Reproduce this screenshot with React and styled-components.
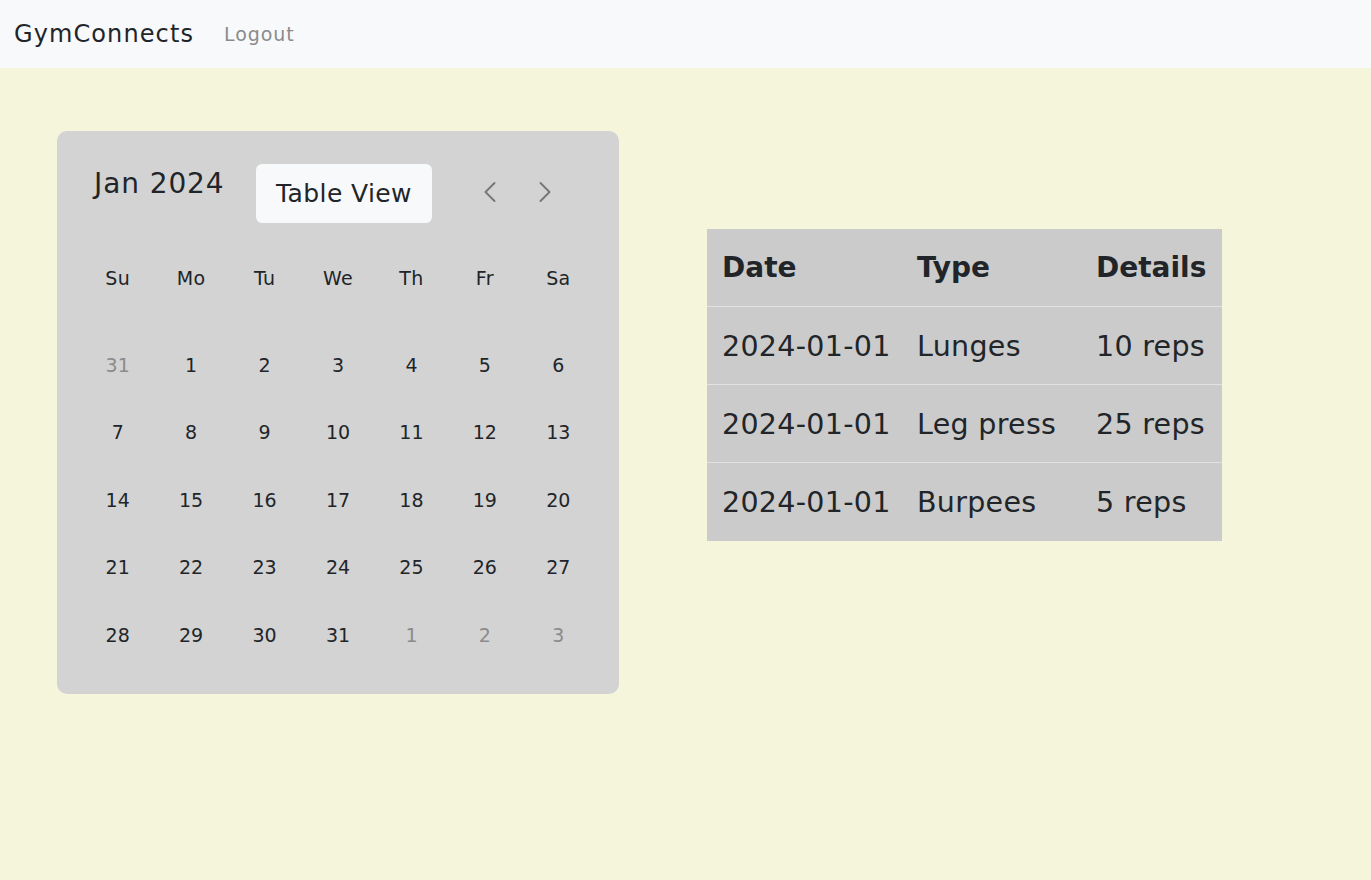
import React from "react";
import styled, { createGlobalStyle } from "styled-components";
import { ChevronLeft, ChevronRight } from "lucide-react";

const Global = createGlobalStyle`
  html, body { margin: 0; padding: 0; }
  body {
    background: #f5f5dc;
    font-family: "DejaVu Sans", "Liberation Sans", sans-serif;
    color: #212529;
    min-height: 880px;
  }
`;

const Navbar = styled.nav`
  height: 68px;
  background: #f8f9fa;
  display: flex;
  align-items: center;
  padding: 0 14px;
  gap: 30px;
`;

const Brand = styled.span`
  font-size: 24px;
  color: #212529;
  letter-spacing: 1.1px;
`;

const NavLink = styled.span`
  font-size: 19px;
  color: #8a8b8c;
  letter-spacing: 0.9px;
`;

const Main = styled.main`
  display: flex;
  align-items: flex-start;
  gap: 88px;
  padding: 63px 57px;
`;

const Card = styled.section`
  width: 562px;
  box-sizing: border-box;
  background: #d3d3d3;
  border-radius: 10px;
  padding: 33px 24px 25px;
`;

const Header = styled.div`
  display: flex;
  align-items: flex-start;
  padding-left: 13px;
  height: 59px;
`;

const Title = styled.h2`
  margin: 0;
  font-weight: 400;
  font-size: 28px;
  letter-spacing: 0.9px;
  line-height: 40px;
  width: 162px;
  white-space: nowrap;
`;

const ViewButton = styled.button`
  width: 176px;
  height: 59px;
  border: none;
  border-radius: 6px;
  background: #f8f9fa;
  font-family: inherit;
  font-size: 25px;
  letter-spacing: 0.4px;
  color: #212529;
  padding: 0;
`;

const Arrows = styled.div`
  display: flex;
  margin-left: 40px;
  margin-top: 10px;
  gap: 19px;
`;

const ArrowButton = styled.button`
  width: 36px;
  height: 36px;
  border: none;
  background: transparent;
  padding: 0;
  color: #777;
  display: flex;
  align-items: center;
  justify-content: center;
`;

const WeekRow = styled.div`
  display: grid;
  grid-template-columns: repeat(7, 1fr);
  height: 56px;
  margin-top: 27px;
  align-items: center;
  text-align: center;
  font-size: 19px;
  letter-spacing: 0.3px;
`;

const DaysGrid = styled.div`
  display: grid;
  grid-template-columns: repeat(7, 1fr);
  grid-auto-rows: 67.5px;
  margin-top: 25px;
  align-items: center;
  text-align: center;
`;

const Day = styled.span`
  font-size: 19px;
  color: ${(p) => (p.$muted ? "#8b8b8b" : "#212529")};
`;

const Table = styled.table`
  margin-top: 98px;
  border-collapse: collapse;
  background: #cbcbcb;
  table-layout: fixed;
  width: 515px;
`;

const Th = styled.th`
  text-align: left;
  font-weight: 700;
  font-size: 28px;
  height: 77px;
  padding: 0 0 0 15px;
  white-space: nowrap;
  border-bottom: 1px solid #e2e2e2;
`;

const Td = styled.td`
  font-size: 28.5px;
  letter-spacing: 0.3px;
  height: 75px;
  padding: 2px 0 0 15px;
  white-space: nowrap;
  border-bottom: 1px solid ${(p) => (p.$last ? "transparent" : "#e2e2e2")};
`;

const weeks = [
  [[31, true], [1], [2], [3], [4], [5], [6]],
  [[7], [8], [9], [10], [11], [12], [13]],
  [[14], [15], [16], [17], [18], [19], [20]],
  [[21], [22], [23], [24], [25], [26], [27]],
  [[28], [29], [30], [31], [1, true], [2, true], [3, true]],
];

const rows = [
  ["2024-01-01", "Lunges", "10 reps"],
  ["2024-01-01", "Leg press", "25 reps"],
  ["2024-01-01", "Burpees", "5 reps"],
];

export default function App() {
  return (
    <>
      <Global />
      <Navbar>
        <Brand>GymConnects</Brand>
        <NavLink>Logout</NavLink>
      </Navbar>
      <Main>
        <Card>
          <Header>
            <Title>Jan 2024</Title>
            <ViewButton>Table View</ViewButton>
            <Arrows>
              <ArrowButton aria-label="previous">
                <ChevronLeft size={36} strokeWidth={1.3} />
              </ArrowButton>
              <ArrowButton aria-label="next">
                <ChevronRight size={36} strokeWidth={1.3} />
              </ArrowButton>
            </Arrows>
          </Header>
          <WeekRow>
            {["Su", "Mo", "Tu", "We", "Th", "Fr", "Sa"].map((d) => (
              <span key={d}>{d}</span>
            ))}
          </WeekRow>
          <DaysGrid>
            {weeks.flat().map(([n, muted], i) => (
              <Day key={i} $muted={muted}>
                {n}
              </Day>
            ))}
          </DaysGrid>
        </Card>
        <Table>
          <colgroup>
            <col style={{ width: 195 }} />
            <col style={{ width: 179 }} />
            <col style={{ width: 141 }} />
          </colgroup>
          <thead>
            <tr>
              <Th>Date</Th>
              <Th>Type</Th>
              <Th>Details</Th>
            </tr>
          </thead>
          <tbody>
            {rows.map((r, i) => (
              <tr key={i}>
                {r.map((c, j) => (
                  <Td key={j} $last={i === rows.length - 1}>
                    {c}
                  </Td>
                ))}
              </tr>
            ))}
          </tbody>
        </Table>
      </Main>
    </>
  );
}
